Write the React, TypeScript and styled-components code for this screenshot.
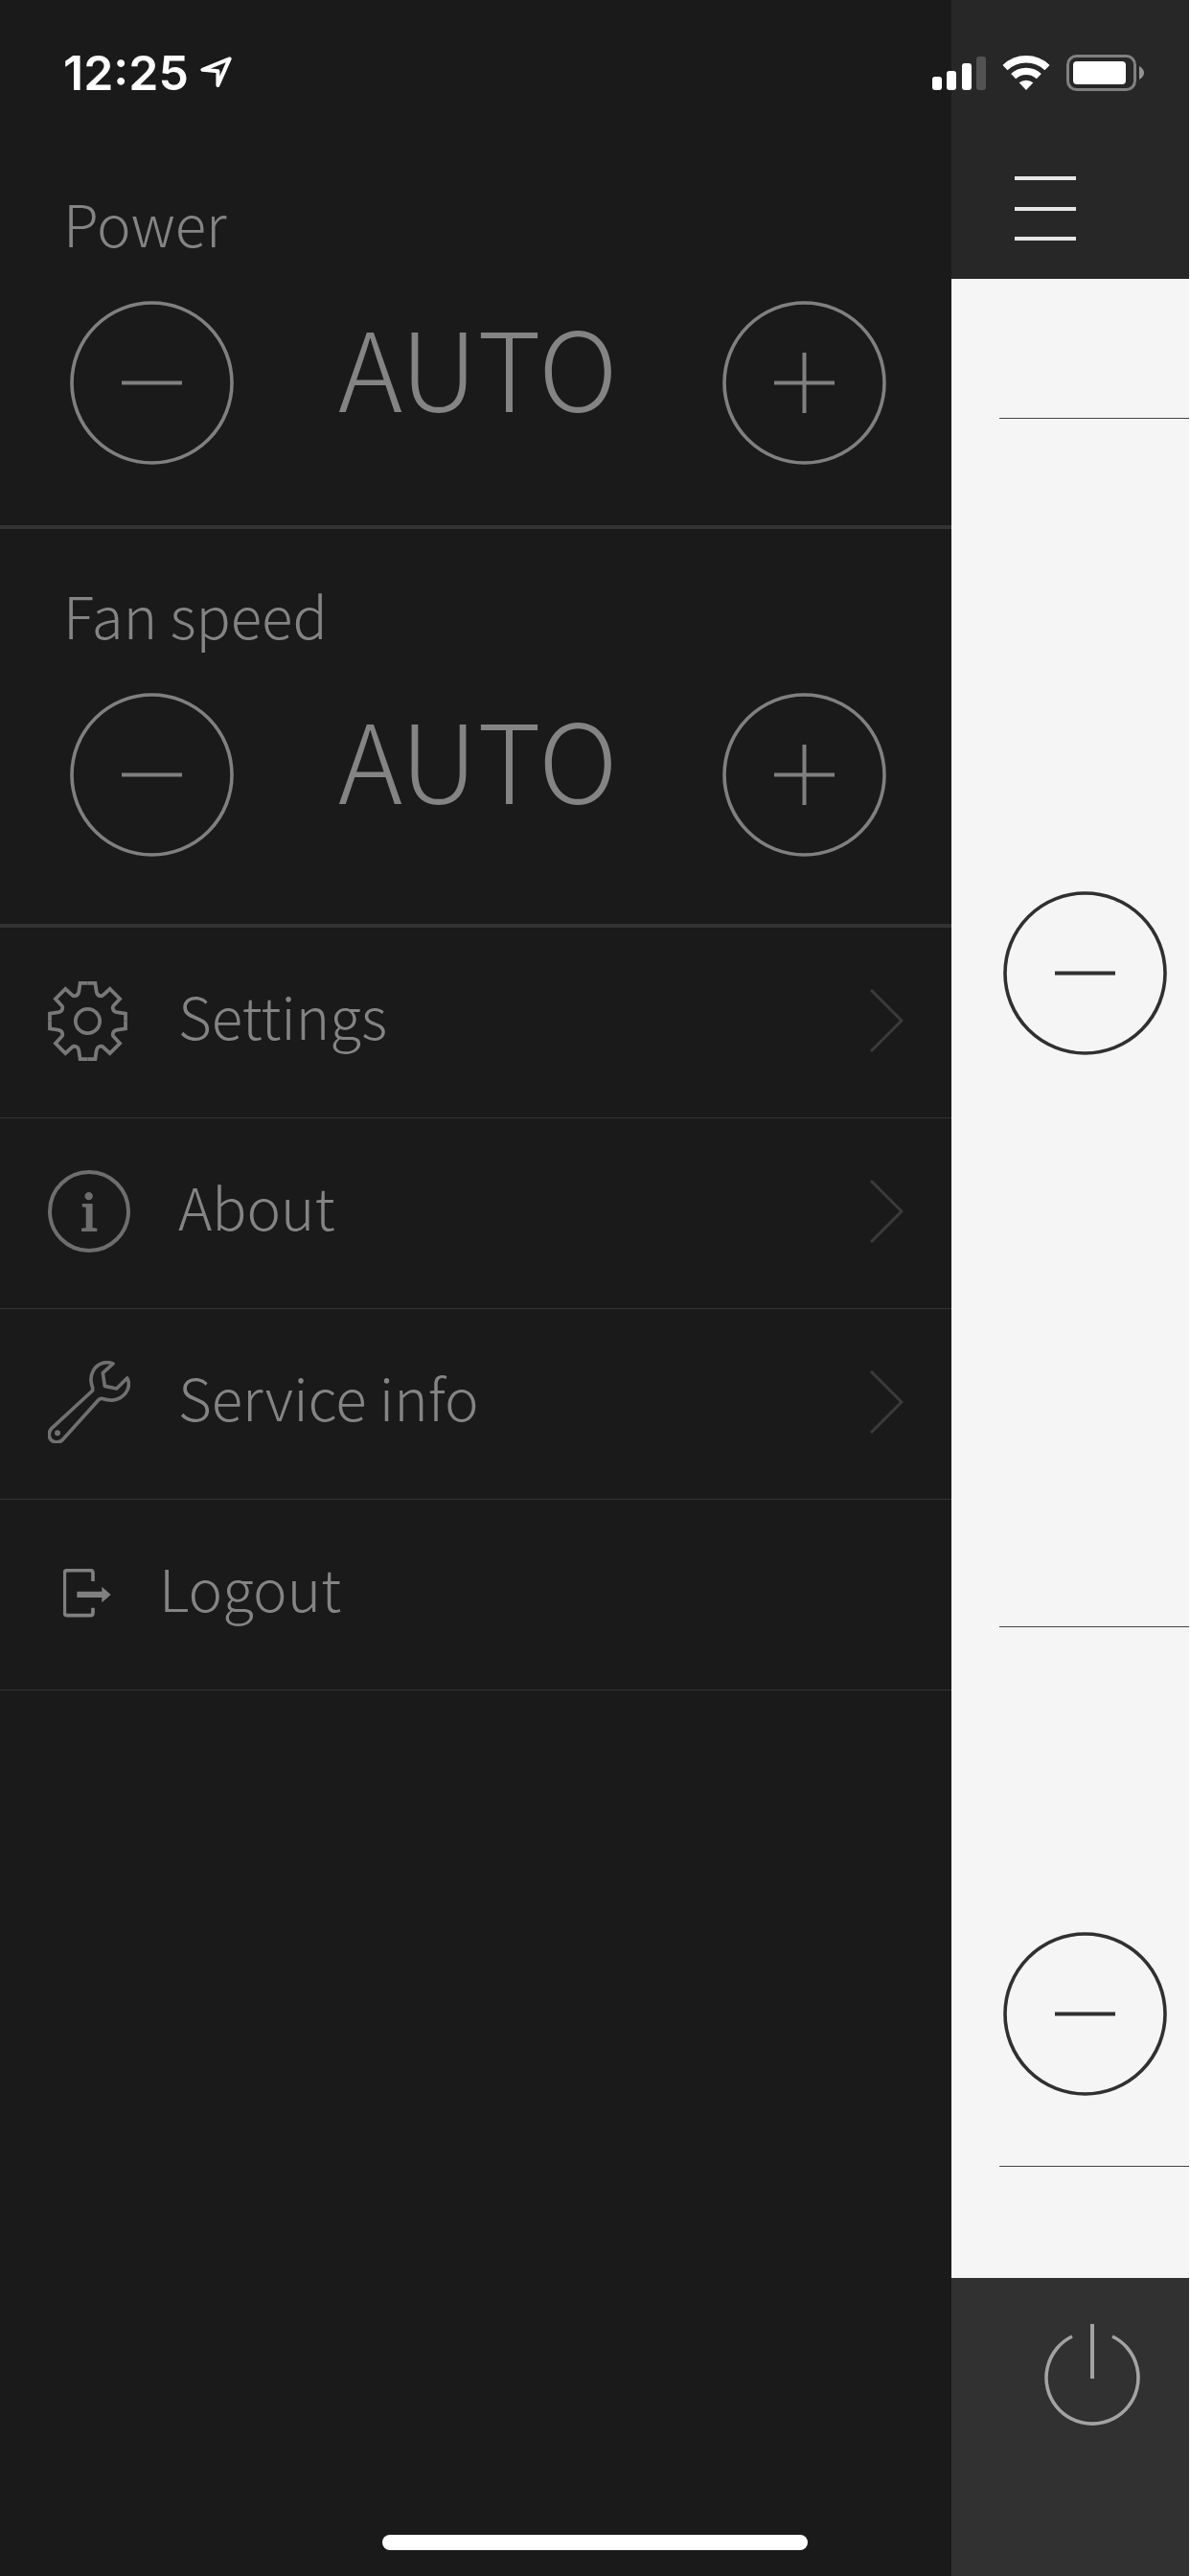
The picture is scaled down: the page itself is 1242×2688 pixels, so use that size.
import React from "react";
import styled, { createGlobalStyle } from "styled-components";

const GlobalStyle = createGlobalStyle`
  *, *::before, *::after { box-sizing: border-box; }
  body { margin: 0; background: #ffffff; }
`;

const textFont = `"Noto Sans CJK SC", "Noto Sans", sans-serif`;

/* ---------- frame ---------- */

const Screen = styled.div`
  position: relative;
  display: grid;
  grid-template-columns: 4fr 1fr;
  min-height: 100vh;
  padding-right: 1px;
  overflow: hidden;
  font-family: ${textFont};
  font-weight: 300;
`;

const StatusBar = styled.div`
  position: absolute;
  inset: 0 0 auto 0;
  display: flex;
  justify-content: space-between;
  align-items: center;
  height: 106px;
  padding: 46px 47px 0 66px;
  color: #ffffff;
  pointer-events: none;
`;

const StatusGroup = styled.div<{ $gap: number }>`
  display: flex;
  align-items: center;
  gap: ${(p) => p.$gap}px;
`;

const Clock = styled.time`
  font-family: Inter, "Liberation Sans", sans-serif;
  font-size: 50px;
  font-weight: 600;
  line-height: 60px;
`;

const HomeIndicator = styled.div`
  position: absolute;
  left: 0;
  right: 0;
  bottom: 27px;
  display: flex;
  justify-content: center;

  &::before {
    content: "";
    width: 444px;
    height: 16px;
    border-radius: 8px;
    background: #ffffff;
  }
`;

/* ---------- drawer ---------- */

const Drawer = styled.aside`
  display: flex;
  flex-direction: column;
  min-width: 0;
  background: #1a1a1a;
  color: #848484;
`;

const ControlSection = styled.section<{ $top: number; $bottom: number }>`
  display: flex;
  flex-direction: column;
  gap: 52px;
  padding: ${(p) => p.$top}px 68px ${(p) => p.$bottom}px 66px;
  border-bottom: 4px solid #333333;
`;

const ControlLabel = styled.h2`
  margin: 0;
  font-size: 60px;
  font-weight: inherit;
  line-height: 60px;
`;

const Stepper = styled.div`
  display: flex;
  justify-content: space-between;
  align-items: flex-start;
  padding-left: 7px;
`;

const StepperValue = styled.output`
  padding-top: 8px;
  font-size: 114px;
  line-height: 118px;
`;

const RoundButton = styled.button<{ $color: string }>`
  display: block;
  flex: none;
  width: 171px;
  height: 171px;
  padding: 0;
  border: 0;
  border-radius: 50%;
  background: transparent;
  color: ${(p) => p.$color};
  cursor: pointer;

  svg {
    display: block;
    width: 100%;
    height: 100%;
  }
`;

const Menu = styled.nav`
  display: flex;
  flex-direction: column;
`;

const MenuLink = styled.a<{ $indent: number }>`
  display: flex;
  align-items: center;
  gap: 50px;
  height: 199px;
  padding: 0 50px 4px ${(p) => p.$indent}px;
  border-bottom: 1px solid #333333;
  color: inherit;
  text-decoration: none;
`;

const MenuText = styled.span`
  flex: 1;
  padding-bottom: 12px;
  font-size: 60px;
  line-height: 60px;
`;

const IconSlot = styled.span<{ $width: number }>`
  display: flex;
  flex: none;
  width: ${(p) => p.$width}px;
`;

const InfoBadge = styled.span`
  display: flex;
  justify-content: center;
  align-items: center;
  width: 86px;
  height: 86px;
  border: 4px solid #6e6e6e;
  border-radius: 50%;
  color: #6e6e6e;
  font-family: "Liberation Serif", serif;
  font-size: 60px;
  font-weight: 400;
  line-height: 60px;
  -webkit-text-stroke: 2px #6e6e6e;
`;

/* ---------- page behind the drawer ---------- */

const Page = styled.main`
  display: flex;
  flex-direction: column;
  min-width: 0;
  overflow: hidden;
  background: #f5f5f5;
`;

const PageHeader = styled.header`
  display: flex;
  height: 291px;
  padding: 184px 0 0 66px;
  background: #272727;
`;

const MenuButton = styled.button`
  display: flex;
  flex-direction: column;
  justify-content: space-between;
  width: 64px;
  height: 67px;
  padding: 0;
  border: 0;
  background: transparent;
  cursor: pointer;
`;

const MenuBar = styled.span`
  height: 4px;
  background: #e6e6e6;
`;

const Panel = styled.section<{ $top: number; $bottom: number; $grow?: boolean }>`
  flex: ${(p) => (p.$grow ? "1 0 auto" : "none")};
  margin-left: 50px;
  padding: ${(p) => p.$top}px 0 ${(p) => p.$bottom}px 4px;
  border-bottom: 1px solid #444444;
`;

const PageFooter = styled.footer`
  display: flex;
  height: 311px;
  margin-top: 116px;
  padding: 48px 0 0 97px;
  background: #313131;
`;

const PowerButton = styled.button`
  display: block;
  flex: none;
  width: 100px;
  height: 106px;
  padding: 0;
  border: 0;
  background: transparent;
  cursor: pointer;

  svg {
    display: block;
  }
`;

/* ---------- drawings ---------- */

const LocationIcon = () => (
  <svg width="34" height="34" viewBox="0 0 34 34" fill="none" aria-hidden="true">
    <path
      d="M30.6 2.4 2.4 13.8 18.4 15.3 18.4 30 Z"
      stroke="#fff"
      strokeWidth="4"
      strokeLinejoin="round"
    />
  </svg>
);

const SignalIcon = () => (
  <svg width="56" height="38" viewBox="0 0 56 38" fill="#fff" aria-hidden="true">
    <rect x="0" y="23" width="10" height="14" rx="3" />
    <rect x="15" y="17" width="10" height="20" rx="3" />
    <rect x="31" y="9" width="10" height="28" rx="3" />
    <rect x="46" y="2" width="10" height="35" rx="3" opacity="0.2" />
  </svg>
);

const WifiIcon = () => (
  <svg width="50" height="38" viewBox="0 0 150 114" fill="none" aria-hidden="true">
    <path d="M9 41 A95 95 0 0 1 141 41" stroke="#fff" strokeWidth="22" />
    <path d="M35 68 A58 58 0 0 1 115 68" stroke="#fff" strokeWidth="22" />
    <path d="M53 88 A34 34 0 0 1 97 88 L75 111 Z" fill="#fff" />
  </svg>
);

const BatteryIcon = () => (
  <svg width="82" height="38" viewBox="0 0 82 38" fill="none" aria-hidden="true">
    <rect x="1.5" y="1.5" width="70" height="35" rx="9" stroke="#808080" strokeWidth="3" />
    <rect x="7" y="7" width="55" height="24" rx="4" fill="#fff" />
    <path d="M76 12 Q81 15 81 19 Q81 23 76 26 Z" fill="#939393" />
  </svg>
);

const StepIcon = ({ plus = false }: { plus?: boolean }) => (
  <svg viewBox="0 0 171 171" fill="none" stroke="currentColor" aria-hidden="true">
    <circle cx="85.5" cy="85.5" r="83.5" strokeWidth="3.6" />
    <path d={plus ? "M54 85.5H117M85.5 54V117" : "M54 85.5H117"} strokeWidth="4" />
  </svg>
);

const gearQuarter =
  "M0 -40 H8 L9.2 -31.5 Q10 -26.5 14.5 -26.5 Q16 -26.8 17.5 -28.5 L23.5 -34 L34 -23.5 L28.5 -17.5 Q26.8 -16 26.5 -14.5 Q26.5 -10 31.5 -9.2 L40 -8 V0";

const GearIcon = () => (
  <svg width="83" height="83" viewBox="-42 -42 84 84" fill="none" stroke="#787878" strokeWidth="3.8" aria-hidden="true">
    {[0, 90, 180, 270].map((angle) => (
      <path key={angle} d={gearQuarter} transform={`rotate(${angle})`} />
    ))}
    <circle r="12.8" />
  </svg>
);

const WrenchIcon = () => (
  <svg width="86" height="86" viewBox="150 177 258 258" aria-hidden="true">
    <path
      d="M354 186 C332 177 306 184 293 206 C281 227 284 243 290 262 L290 270 L162 388 C148 402 153 425 168 430 C178 433 188 432 195 425 L310 298 L318 295 C345 303 360 302 378 292 C402 276 409 250 398 231 L365 264 L328 256 L322 215 Z"
      fill="none"
      stroke="#707070"
      strokeWidth="11"
      strokeLinejoin="round"
    />
    <circle cx="180" cy="403" r="9" fill="#707070" />
  </svg>
);

const LogoutIcon = () => (
  <svg width="50" height="51" viewBox="198 826 150 153" aria-hidden="true">
    <path
      d="M291 865V840Q291 831 282 831H211Q202 831 202 840V963Q202 972 211 972H282Q291 972 291 963V948"
      fill="none"
      stroke="#808080"
      strokeWidth="11"
    />
    <path d="M241 897H319V882L347 907L319 932V916H241Z" fill="#808080" />
  </svg>
);

const ChevronIcon = () => (
  <svg width="36" height="68" viewBox="0 0 36 68" fill="none" aria-hidden="true">
    <path d="M2 2 34 34 2 66" stroke="#3b3b3b" strokeWidth="3" />
  </svg>
);

const PowerIcon = () => (
  <svg width="100" height="106" viewBox="0 0 100 106" fill="none" stroke="#a3a3a3" aria-hidden="true">
    <path d="M29 13 A48 48 0 1 0 71 13" strokeWidth="3.6" />
    <path d="M50 0V57" strokeWidth="4" />
  </svg>
);

/* ---------- parts ---------- */

type ControlProps = { label: string; value: string; top: number; bottom: number };

const Control = ({ label, value, top, bottom }: ControlProps) => (
  <ControlSection $top={top} $bottom={bottom} aria-label={label}>
    <ControlLabel>{label}</ControlLabel>
    <Stepper>
      <RoundButton type="button" $color="#808080" aria-label={`Decrease ${label}`}>
        <StepIcon />
      </RoundButton>
      <StepperValue>{value}</StepperValue>
      <RoundButton type="button" $color="#808080" aria-label={`Increase ${label}`}>
        <StepIcon plus />
      </RoundButton>
    </Stepper>
  </ControlSection>
);

const menuItems = [
  { text: "Settings", icon: <GearIcon />, width: 86, indent: 50, chevron: true },
  { text: "About", icon: <InfoBadge aria-hidden="true">i</InfoBadge>, width: 86, indent: 50, chevron: true },
  { text: "Service info", icon: <WrenchIcon />, width: 86, indent: 50, chevron: true },
  { text: "Logout", icon: <LogoutIcon />, width: 50, indent: 66, chevron: false },
];

export default function App() {
  return (
    <Screen>
      <GlobalStyle />
      <Drawer>
        <Control label="Power" value="AUTO" top={202} bottom={63} />
        <Control label="Fan speed" value="AUTO" top={59} bottom={70} />
        <Menu>
          {menuItems.map((item) => (
            <MenuLink key={item.text} href="#" $indent={item.indent}>
              <IconSlot $width={item.width}>{item.icon}</IconSlot>
              <MenuText>{item.text}</MenuText>
              {item.chevron && <ChevronIcon />}
            </MenuLink>
          ))}
        </Menu>
      </Drawer>

      <Page>
        <PageHeader>
          <MenuButton type="button" aria-label="Menu">
            <MenuBar />
            <MenuBar />
            <MenuBar />
          </MenuButton>
        </PageHeader>
        <Panel $top={72} $bottom={73} />
        <Panel $top={493} $bottom={72} $grow>
          <RoundButton type="button" $color="#303030" aria-label="Decrease temperature">
            <StepIcon />
          </RoundButton>
        </Panel>
        <Panel $top={318} $bottom={73}>
          <RoundButton type="button" $color="#303030" aria-label="Decrease level">
            <StepIcon />
          </RoundButton>
        </Panel>
        <PageFooter>
          <PowerButton type="button" aria-label="Turn off">
            <PowerIcon />
          </PowerButton>
        </PageFooter>
      </Page>

      <StatusBar>
        <StatusGroup $gap={12}>
          <Clock>12:25</Clock>
          <LocationIcon />
        </StatusGroup>
        <StatusGroup $gap={17}>
          <SignalIcon />
          <WifiIcon />
          <BatteryIcon />
        </StatusGroup>
      </StatusBar>
      <HomeIndicator />
    </Screen>
  );
}
